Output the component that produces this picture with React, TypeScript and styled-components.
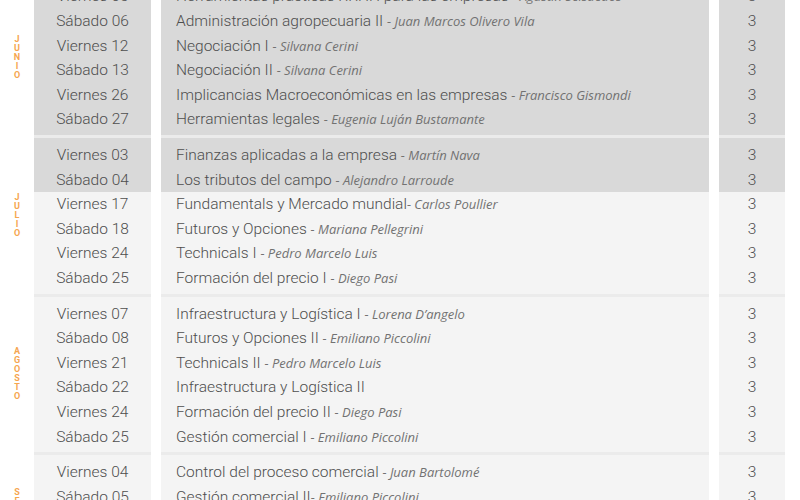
import React from "react";
import styled, { createGlobalStyle } from "styled-components";

const Global = createGlobalStyle`
  html, body { margin: 0; padding: 0; background: #fff; overflow: hidden; }
  body { font-family: Roboto, "Liberation Sans", sans-serif; }
`;

type Row = { day: string; subject: string; teacher?: string; tight?: boolean; dark?: boolean; credits: number };
type Month = { name: string; rows: Row[]; minHeight?: number };

const months: Month[] = [
  {
    name: "JUNIO",
    rows: [
      { day: "Viernes 05", subject: "Herramientas prácticas RRHH para las empresas", teacher: "Agustín Seisdedos", dark: true, credits: 3 },
      { day: "Sábado 06", subject: "Administración agropecuaria II", teacher: "Juan Marcos Olivero Vila", dark: true, credits: 3 },
      { day: "Viernes 12", subject: "Negociación I", teacher: "Silvana Cerini", dark: true, credits: 3 },
      { day: "Sábado 13", subject: "Negociación II", teacher: "Silvana Cerini", dark: true, credits: 3 },
      { day: "Viernes 26", subject: "Implicancias Macroeconómicas en las empresas", teacher: "Francisco Gismondi", dark: true, credits: 3 },
      { day: "Sábado 27", subject: "Herramientas legales", teacher: "Eugenia Luján Bustamante", dark: true, credits: 3 },
    ],
  },
  {
    name: "JULIO",
    rows: [
      { day: "Viernes 03", subject: "Finanzas aplicadas a la empresa", teacher: "Martín Nava", dark: true, credits: 3 },
      { day: "Sábado 04", subject: "Los tributos del campo", teacher: "Alejandro Larroude", dark: true, credits: 3 },
      { day: "Viernes 17", subject: "Fundamentals y Mercado mundial", teacher: "Carlos Poullier", tight: true, credits: 3 },
      { day: "Sábado 18", subject: "Futuros y Opciones", teacher: "Mariana Pellegrini", credits: 3 },
      { day: "Viernes 24", subject: "Technicals I", teacher: "Pedro Marcelo Luis", credits: 3 },
      { day: "Sábado 25", subject: "Formación del precio I", teacher: "Diego Pasi", credits: 3 },
    ],
  },
  {
    name: "AGOSTO",
    rows: [
      { day: "Viernes 07", subject: "Infraestructura y Logística I", teacher: "Lorena D’angelo", credits: 3 },
      { day: "Sábado 08", subject: "Futuros y Opciones II", teacher: "Emiliano Piccolini", credits: 3 },
      { day: "Viernes 21", subject: "Technicals II", teacher: "Pedro Marcelo Luis", credits: 3 },
      { day: "Sábado 22", subject: "Infraestructura y Logística II", credits: 3 },
      { day: "Viernes 24", subject: "Formación del precio II", teacher: "Diego Pasi", credits: 3 },
      { day: "Sábado 25", subject: "Gestión comercial I", teacher: "Emiliano Piccolini", credits: 3 },
    ],
  },
  {
    name: "SEPTIEMBRE",
    minHeight: 156,
    rows: [
      { day: "Viernes 04", subject: "Control del proceso comercial", teacher: "Juan Bartolomé", credits: 3 },
      { day: "Sábado 05", subject: "Gestión comercial II", teacher: "Emiliano Piccolini", tight: true, credits: 3 },
    ],
  },
];

const Viewport = styled.div`
  width: 800px;
  height: 500px;
  overflow: hidden;
  background: #fff;
`;

const Table = styled.div`
  width: 785px;
  margin-top: -23.6px;
  display: flex;
  flex-direction: column;
`;

const Section = styled.div`
  display: flex;
  align-items: stretch;
`;

const MonthLabel = styled.div`
  width: 34px;
  flex: none;
  display: flex;
  flex-direction: column;
  align-items: center;
  justify-content: center;
  padding-top: 3px;
  font-family: Roboto, "Liberation Sans", sans-serif;
  font-weight: 700;
  font-size: 9px;
  line-height: 9px;
  color: #f6a650;
`;

const Column = styled.div<{ $width: number; $min?: number; $gapBefore?: boolean }>`
  width: ${(p) => p.$width}px;
  flex: none;
  margin-left: ${(p) => (p.$gapBefore ? 10 : 0)}px;
  border-top: 3px solid #ebebeb;
  display: flex;
  flex-direction: column;
  min-height: ${(p) => p.$min ?? 0}px;
  background: #f4f4f4;
`;

const Cell = styled.div<{ $dark?: boolean; $align: "left" | "center" }>`
  height: 24.6px;
  line-height: 24.6px;
  box-sizing: content-box;
  background: ${(p) => (p.$dark ? "#d9d9d9" : "#f4f4f4")};
  text-align: ${(p) => p.$align};
  padding-left: ${(p) => (p.$align === "left" ? 15 : 0)}px;
  white-space: nowrap;
  overflow: hidden;
  font-family: Roboto, "Liberation Sans", sans-serif;
  font-weight: 300;
  font-size: 15.5px;
  color: #4e4e4e;
  &:first-child { padding-top: 5px; }
  &:last-child { padding-bottom: 3px; }
`;

const Teacher = styled.span`
  font-family: "Open Sans", "Noto Sans", sans-serif;
  font-style: italic;
  font-weight: 400;
  font-size: 13px;
  color: #727272;
`;

export default function App() {
  return (
    <Viewport>
      <Global />
      <Table>
        {months.map((m) => (
          <Section key={m.name}>
            <MonthLabel>
              {m.name.split("").map((ch, i) => (
                <span key={i}>{ch}</span>
              ))}
            </MonthLabel>
            <Column $width={117} $min={m.minHeight}>
              {m.rows.map((r, i) => (
                <Cell key={i} $dark={r.dark} $align="center">{r.day}</Cell>
              ))}
            </Column>
            <Column $width={548} $min={m.minHeight} $gapBefore>
              {m.rows.map((r, i) => (
                <Cell key={i} $dark={r.dark} $align="left">
                  {r.subject}
                  {r.teacher && (
                    <>
                      {r.tight ? "" : " "}
                      <Teacher>- {r.teacher}</Teacher>
                    </>
                  )}
                </Cell>
              ))}
            </Column>
            <Column $width={66} $min={m.minHeight} $gapBefore>
              {m.rows.map((r, i) => (
                <Cell key={i} $dark={r.dark} $align="center">{r.credits}</Cell>
              ))}
            </Column>
          </Section>
        ))}
      </Table>
    </Viewport>
  );
}
